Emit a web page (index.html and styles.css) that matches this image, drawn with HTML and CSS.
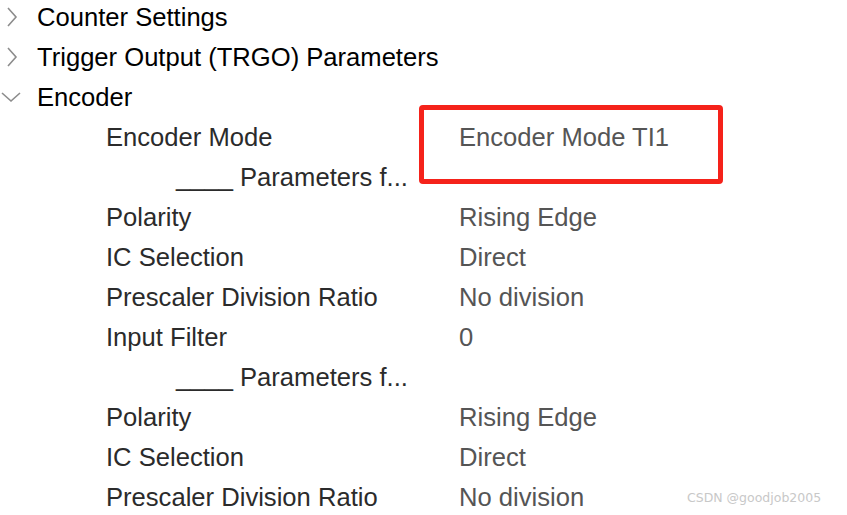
FILE: index.html
```html
<!DOCTYPE html>
<html lang="en">
<head>
  <meta charset="UTF-8">
  <title>TIM Parameter Settings</title>
  <link rel="stylesheet" href="styles.css">
</head>
<body>

<div class="tree">
  <!-- collapsed groups -->
  <div class="group">
    <svg class="chev" width="22" height="22" viewBox="0 0 22 22"><path d="M8 2 L16 11 L8 20" fill="none" stroke="#8c8c8c" stroke-width="1.6"/></svg>
    <span>Counter Settings</span>
  </div>
  <div class="group">
    <svg class="chev" width="22" height="22" viewBox="0 0 22 22"><path d="M8 2 L16 11 L8 20" fill="none" stroke="#8c8c8c" stroke-width="1.6"/></svg>
    <span>Trigger Output (TRGO) Parameters</span>
  </div>

  <!-- expanded group -->
  <div class="group">
    <svg class="chev" width="22" height="22" viewBox="0 0 22 22"><path d="M2 7 L11 15 L20 7" fill="none" stroke="#8c8c8c" stroke-width="1.6"/></svg>
    <span>Encoder</span>
  </div>

  <div class="prop">
    <span class="label">Encoder Mode</span>
    <span class="value highlight">Encoder Mode TI1</span>
  </div>
  <div class="sub">____ Parameters f...</div>
  <div class="prop"><span class="label">Polarity</span><span class="value">Rising Edge</span></div>
  <div class="prop"><span class="label">IC Selection</span><span class="value">Direct</span></div>
  <div class="prop"><span class="label">Prescaler Division Ratio</span><span class="value">No division</span></div>
  <div class="prop"><span class="label">Input Filter</span><span class="value">0</span></div>
  <div class="sub">____ Parameters f...</div>
  <div class="prop"><span class="label">Polarity</span><span class="value">Rising Edge</span></div>
  <div class="prop"><span class="label">IC Selection</span><span class="value">Direct</span></div>
  <div class="prop"><span class="label">Prescaler Division Ratio</span><span class="value">No division</span></div>
</div>

<div class="watermark">CSDN @goodjob2005</div>

</body>
</html>
```

FILE: styles.css
```css
body { margin: 0; background: #fff; font-family: "Liberation Sans", Arial, sans-serif; overflow: hidden; }
.tree { margin-top: -3px; font-size: 25.6px; }
.group { height: 40px; display: flex; align-items: center; color: #000; }
.chev { width: 22px; height: 22px; margin: 0 15px 0 0; flex: none; }
.prop { height: 40px; display: grid; grid-template-columns: 353px 1fr; align-items: center; padding-left: 106px; }
.label { color: #2b2b2b; }
.value { color: #555; position: relative; }
.sub { height: 40px; display: flex; align-items: center; padding-left: 176px; color: #2b2b2b; }
.highlight::before { content: ""; position: absolute; left: -40px; top: -18px; width: 294px; height: 69px; border: 5px solid #f5221a; border-radius: 4px; }
.watermark { position: absolute; left: 687px; top: 490px; font-size: 12.5px; color: #c8c8c8; font-family: "DejaVu Sans", sans-serif; }
```
